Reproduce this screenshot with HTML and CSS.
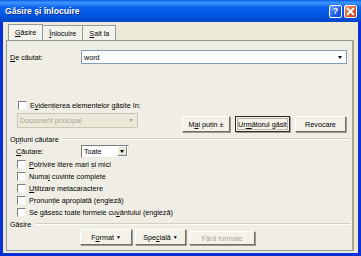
FILE: index.html
```html
<!DOCTYPE html>
<html lang="ro">
<head>
  <meta charset="UTF-8">
  <title>Găsire și înlocuire</title>
  <link rel="stylesheet" href="styles.css">
</head>
<body>
  <div class="window">
    <div class="titlebar">
      <span class="title">Găsire și înlocuire</span>
      <div class="caption-btns">
        <span class="cap help">?</span>
        <span class="cap close">
          <svg width="9" height="9" viewBox="0 0 9 9"><path d="M1 1L8 8M8 1L1 8" stroke="#fff" stroke-width="1.8"/></svg>
        </span>
      </div>
    </div>

    <div class="client">
      <div class="tabs">
        <div class="tab active"><u>G</u>ăsire</div>
        <div class="tab"><u>Î</u>nlocuire</div>
        <div class="tab"><u>S</u>alt la</div>
      </div>

      <div class="panel">
        <div class="row find-row">
          <label class="lbl"><u>D</u>e căutat:</label>
          <div class="combo wide">
            <span class="combo-text">word</span>
            <span class="arrow-btn flat"><span class="tri"></span></span>
          </div>
        </div>

        <div class="check-row highlight">
          <span class="box"></span>
          <span>E<u>v</u>idențierea elementelor găsite în:</span>
        </div>

        <div class="row actions">
          <div class="combo disabled">
            <span class="combo-text">Document principal</span>
            <span class="arrow-btn flat"><span class="tri"></span></span>
          </div>
          <div class="btns">
            <button class="btn less">M<u>a</u>i puțin ±</button>
            <button class="btn default">Ur<u>m</u>ătorul găsit</button>
            <button class="btn cancel">Revocare</button>
          </div>
        </div>

        <div class="group-head">
          <span>Op<u>ț</u>iuni căutare</span>
          <span class="rule"></span>
        </div>

        <div class="row search-row">
          <label class="lbl small"><u>C</u>ăutare:</label>
          <div class="combo mode">
            <span class="combo-text">Toate</span>
            <span class="arrow-btn"><span class="tri"></span></span>
          </div>
        </div>

        <div class="options">
          <div class="check-row"><span class="box"></span><span><u>P</u>otrivire litere mari și mici</span></div>
          <div class="check-row"><span class="box"></span><span>Numa<u>i</u> cuvinte complete</span></div>
          <div class="check-row"><span class="box"></span><span><u>U</u>tilizare metacaractere</span></div>
          <div class="check-row"><span class="box"></span><span>Pronun<u>ț</u>ie apropiată (engleză)</span></div>
          <div class="check-row"><span class="box"></span><span>Se găsesc toate formele cu<u>v</u>ântului (engleză)</span></div>
        </div>

        <div class="group-head find-head">
          <span>Găsire</span>
          <span class="rule"></span>
        </div>

        <div class="bottom-btns">
          <button class="btn fmt">F<u>o</u>rmat <span class="dd">▼</span></button>
          <button class="btn spec">Spe<u>c</u>ială <span class="dd">▼</span></button>
          <button class="btn off" disabled>Fără formate</button>
        </div>
      </div>
    </div>
  </div>
</body>
</html>
```

FILE: styles.css
```css
body {
  margin: 0;
  width: 361px;
  height: 256px;
  overflow: hidden;
  font-family: "Liberation Sans", Arial, sans-serif;
  font-size: 7.2px;
  color: #000;
}

.window {
  width: 361px;
  height: 256px;
  background: #0831D9;
  display: flex;
  flex-direction: column;
}

.titlebar {
  height: 22px;
  flex: none;
  display: flex;
  align-items: center;
  justify-content: space-between;
  padding: 0 4px 0 5px;
  background: linear-gradient(#0A5FE6 0%, #3D95FF 12%, #0A61EE 35%, #0255E0 70%, #0344C8 100%);
  box-sizing: border-box;
}

.title {
  color: #fff;
  font-weight: bold;
  font-size: 8.6px;
  text-shadow: 1px 1px 0 #0B2C8E;
}

.caption-btns {
  display: flex;
  gap: 2px;
}

.cap {
  width: 13px;
  height: 13px;
  border: 1px solid #fff;
  border-radius: 2px;
  box-sizing: border-box;
  display: flex;
  align-items: center;
  justify-content: center;
  color: #fff;
  font-weight: bold;
  font-size: 9px;
}

.help {
  background: linear-gradient(135deg, #6FA6FF, #1E5CE8 60%, #1246C6);
}

.close {
  background: linear-gradient(135deg, #F29A78, #E15A2E 55%, #C33E17);
}

.client {
  flex: 1;
  margin: 0 3px 3px 3px;
  background: #ECE9D8;
  display: flex;
  flex-direction: column;
}

.tabs {
  display: flex;
  height: 16px;
  margin: 2px 0 0 5px;
  align-items: flex-end;
}

.tab {
  height: 15px;
  padding: 0 6px;
  display: flex;
  align-items: center;
  border: 1px solid #919B9C;
  border-bottom: none;
  border-left: none;
  background: #F3F2EA;
  box-sizing: border-box;
}

.tab:first-child {
  border-left: 1px solid #919B9C;
}

.tab.active {
  height: 16px;
  background: #F4F3EE;
}

.panel {
  flex: 1;
  margin: 0 4px 2px 3px;
  border: 1px solid #919B9C;
  border-right: 2px solid #A8A595;
  background: #F0EEE4;
  padding: 0 5px 0 3px;
  display: flex;
  flex-direction: column;
}

.row {
  display: flex;
  align-items: center;
}

.find-row {
  margin-top: 9px;
  height: 14px;
}

.lbl {
  width: 71px;
  flex: none;
}

.lbl.small {
  width: 64px;
  margin-left: 6px;
  margin-right: 1px;
}

.combo {
  height: 14px;
  border: 1px solid #7F9DB9;
  background: #fff;
  display: flex;
  align-items: center;
  justify-content: space-between;
  box-sizing: border-box;
  padding-left: 2px;
}

.combo.wide {
  width: 266px;
}

.combo.disabled {
  width: 121px;
  height: 15px;
  margin-left: 7px;
  background: #ECE9D8;
  border-color: #C9C7BA;
  color: #ACA899;
}

.combo.mode {
  width: 48px;
  height: 13px;
  border: 1px solid #555;
  border-color: #7A7A7A #E8E8E8 #E8E8E8 #7A7A7A;
}

.arrow-btn {
  width: 10px;
  height: 10px;
  margin-right: 1px;
  display: flex;
  align-items: center;
  justify-content: center;
  background: #ECE9D8;
  border: 1px solid;
  border-color: #fff #808080 #808080 #fff;
  box-sizing: border-box;
}

.arrow-btn.flat {
  background: #fff;
  border-color: #fff;
}

.combo.disabled .arrow-btn {
  background: #ECE9D8;
  border-color: #ECE9D8;
}

.tri {
  width: 0;
  height: 0;
  border-left: 2.5px solid transparent;
  border-right: 2.5px solid transparent;
  border-top: 3px solid #000;
}

.combo.disabled .tri {
  border-top-color: #ACA899;
}

.check-row {
  display: flex;
  align-items: center;
  gap: 3px;
  height: 12px;
}

.box {
  width: 7px;
  height: 7px;
  flex: none;
  background: #fff;
  border: 1px solid;
  border-color: #808080 #F0F0F0 #F0F0F0 #808080;
}

.highlight {
  margin-top: 36px;
  height: 10px;
  margin-left: 8px;
}

.actions {
  margin-top: 3px;
  height: 19px;
  align-items: flex-start;
  justify-content: space-between;
}

.btns {
  display: flex;
  gap: 5px;
  margin-top: 3px;
}

.btn {
  font-family: inherit;
  font-size: 7.2px;
  height: 16px;
  padding: 0;
  background: #F3F1E8;
  border: 1px solid;
  border-color: #fff #716F64 #716F64 #fff;
  box-shadow: 1px 1px 0 #9D9B90;
  color: #000;
}

.less {
  width: 48px;
}

.default {
  width: 55px;
  border: 1px solid #2A2A2A;
  outline: 1px solid #B9B6A6;
  outline-offset: -3px;
}

.cancel {
  width: 51px;
  margin-right: 1px;
}

.group-head {
  display: flex;
  align-items: center;
  height: 10px;
  margin-top: 2px;
}

.rule {
  flex: 1;
  height: 0;
  border-top: 1px solid #D0D0BF;
  border-bottom: 1px solid #fff;
  margin-left: 4px;
  margin-right: -3px;
}

.search-row {
  margin-top: 1px;
  height: 12px;
}

.options {
  display: flex;
  flex-direction: column;
  margin-left: 7px;
  margin-top: 1px;
}

.find-head {
  margin-top: 1px;
}

.bottom-btns {
  display: flex;
  gap: 3px;
  margin-left: 70px;
}

.fmt {
  width: 52px;
}

.spec {
  width: 51px;
}

.off {
  width: 66px;
  color: #ACA899;
  margin-top: 2px;
  height: 14px;
}

.dd {
  font-size: 5px;
  vertical-align: 1px;
}
```
